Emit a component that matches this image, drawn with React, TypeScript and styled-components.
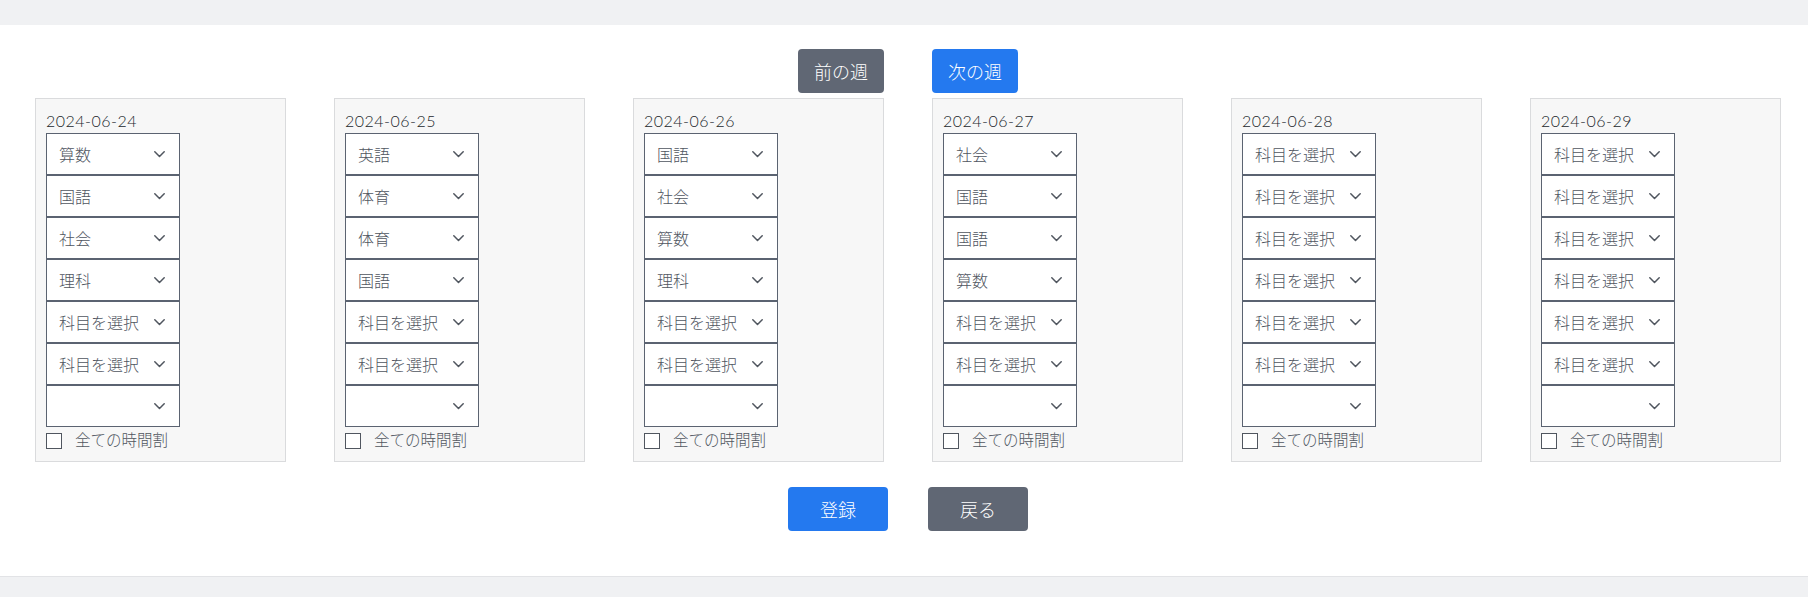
import React from "react";
import styled, { createGlobalStyle } from "styled-components";

const GlobalStyle = createGlobalStyle`
  html, body {
    margin: 0;
    padding: 0;
    background: #f0f1f3;
    font-family: "Noto Sans CJK JP", "Noto Sans", sans-serif;
  }
  * { box-sizing: border-box; }
`;

const TopBar = styled.div`
  height: 25px;
  background: #f0f1f3;
`;

const Main = styled.main`
  background: #ffffff;
  padding: 24px 0 45px 8px;
  border-bottom: 1px solid #e2e3e6;
  display: flex;
  flex-direction: column;
  align-items: center;
`;

const BottomBar = styled.div`
  height: 22px;
  background: #f0f1f3;
`;

const ButtonRow = styled.div<{ $gap: number; $mt?: number }>`
  display: flex;
  justify-content: center;
  gap: ${(p) => p.$gap}px;
  margin-top: ${(p) => p.$mt ?? 0}px;
`;

const Button = styled.button<{ $variant: "primary" | "secondary"; $width: number }>`
  width: ${(p) => p.$width}px;
  height: 44px;
  border: none;
  border-radius: 4px;
  font-family: "Noto Sans CJK JP", sans-serif;
  font-size: 18px;
  font-weight: 300;
  color: #ffffff;
  background: ${(p) => (p.$variant === "primary" ? "#2479ef" : "#606774")};
  padding: 0;
  cursor: pointer;
`;

const Grid = styled.div`
  display: grid;
  grid-template-columns: repeat(6, 251px);
  column-gap: 48px;
  margin-top: 5px;
`;

const Card = styled.div`
  background: #f7f7f7;
  border: 1px solid #dadbdd;
  padding: 10px;
  height: 364px;
`;

const DateLabel = styled.div`
  font-family: Lato, "Noto Sans CJK JP", sans-serif;
  font-size: 16px;
  font-weight: 300;
  letter-spacing: 0.5px;
  line-height: 24px;
  color: #22262c;
`;

const SelectWrap = styled.div`
  position: relative;
  width: 134px;
  height: 42px;
`;

const Select = styled.select`
  appearance: none;
  -webkit-appearance: none;
  width: 100%;
  height: 100%;
  border: 1px solid #5b6371;
  border-radius: 0;
  background: #ffffff;
  padding: 0 0 0 12px;
  font-family: "Noto Sans CJK JP", sans-serif;
  font-size: 16px;
  font-weight: 300;
  color: #50565f;
  outline: none;
`;

const Chevron = styled.svg`
  position: absolute;
  right: 15px;
  top: 18px;
  pointer-events: none;
`;

const CheckRow = styled.label`
  display: flex;
  align-items: center;
  height: 24px;
  gap: 13px;
  font-size: 15.5px;
  font-weight: 300;
  color: #50565f;
`;

const Check = styled.input`
  appearance: none;
  -webkit-appearance: none;
  flex-shrink: 0;
  width: 16px;
  height: 16px;
  margin: 3px 0 0 0;
  border: 1px solid #50565f;
  border-radius: 0;
  background: #ffffff;
`;

const days: { date: string; subjects: string[] }[] = [
  { date: "2024-06-24", subjects: ["算数", "国語", "社会", "理科", "科目を選択", "科目を選択", ""] },
  { date: "2024-06-25", subjects: ["英語", "体育", "体育", "国語", "科目を選択", "科目を選択", ""] },
  { date: "2024-06-26", subjects: ["国語", "社会", "算数", "理科", "科目を選択", "科目を選択", ""] },
  { date: "2024-06-27", subjects: ["社会", "国語", "国語", "算数", "科目を選択", "科目を選択", ""] },
  { date: "2024-06-28", subjects: Array(6).fill("科目を選択").concat([""]) },
  { date: "2024-06-29", subjects: Array(6).fill("科目を選択").concat([""]) },
];

function SubjectSelect({ value }: { value: string }) {
  return (
    <SelectWrap>
      <Select defaultValue={value}>
        <option value={value}>{value}</option>
      </Select>
      <Chevron width="11" height="7" viewBox="0 0 11 7" fill="none">
        <polyline points="0.8,0.8 5.5,5.5 10.2,0.8" stroke="#50565f" strokeWidth="1.5" strokeLinecap="round" strokeLinejoin="round" />
      </Chevron>
    </SelectWrap>
  );
}

export default function App() {
  return (
    <>
      <GlobalStyle />
      <TopBar />
      <Main>
        <ButtonRow $gap={48}>
          <Button $variant="secondary" $width={86}>前の週</Button>
          <Button $variant="primary" $width={86}>次の週</Button>
        </ButtonRow>
        <Grid>
          {days.map((d) => (
            <Card key={d.date}>
              <DateLabel>{d.date}</DateLabel>
              {d.subjects.map((s, i) => (
                <SubjectSelect key={i} value={s} />
              ))}
              <CheckRow>
                <Check type="checkbox" />
                全ての時間割
              </CheckRow>
            </Card>
          ))}
        </Grid>
        <ButtonRow $gap={40} $mt={25}>
          <Button $variant="primary" $width={100}>登録</Button>
          <Button $variant="secondary" $width={100}>戻る</Button>
        </ButtonRow>
      </Main>
      <BottomBar />
    </>
  );
}
